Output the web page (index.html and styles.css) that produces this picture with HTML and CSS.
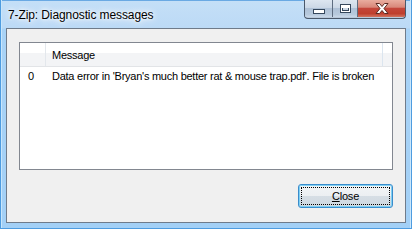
FILE: index.html
```html
<!DOCTYPE html>
<html>
<head>
<meta charset="utf-8">
<link rel="stylesheet" href="styles.css">
</head>
<body>
<div class="window">
  <div class="titlebar">
    <span class="title">7-Zip: Diagnostic messages</span>
    <div class="caption-buttons">
      <span class="cbtn cb-min"><span class="glyph-min"></span></span>
      <span class="cbtn cb-max"><span class="glyph-max"></span></span>
      <span class="cbtn cb-close">
        <svg width="14" height="11" viewBox="0 0 14 11"><path d="M1 0.5 H4.5 L7 3.5 L9.5 0.5 H13 L9 5.5 L13 10.5 H9.5 L7 7.5 L4.5 10.5 H1 L5 5.5 Z" fill="#fff" stroke="#5a2a22" stroke-width="1" stroke-linejoin="round"/></svg>
      </span>
    </div>
  </div>
  <div class="client">
    <div class="list">
      <div class="header">
        <div class="hcol c1"></div>
        <div class="hcol c2">Message</div>
        <div class="hcol c3"></div>
      </div>
      <div class="row">
        <div class="cell c1">0</div>
        <div class="cell c2">Data error in 'Bryan's much better rat &amp; mouse trap.pdf'. File is broken</div>
      </div>
    </div>
    <div class="footer">
      <button class="btn"><span><u>C</u>lose</span></button>
    </div>
  </div>
</div>
</body>
</html>
```

FILE: styles.css
```css
html, body {
  margin: 0;
  padding: 0;
}
body {
  width: 412px;
  height: 229px;
  overflow: hidden;
  font-family: "Liberation Sans", Arial, sans-serif;
}
.window {
  box-sizing: border-box;
  width: 412px;
  height: 229px;
  padding: 0 5px 5px 5px;
  border: 1px solid #4e9ce0;
  border-top: none;
  background: linear-gradient(to bottom, #6aa9e3 0px, #6aa9e3 1px, #c4dff7 1px, #bcdaf6 28px, #a9d3f6 29px, #a3d0f6 100%);
  box-shadow: inset 1px 0 0 #c9e6fb, inset -1px 0 0 #c9e6fb;
  display: flex;
  flex-direction: column;
}
.titlebar {
  height: 28px;
  display: flex;
  align-items: flex-start;
}
.title {
  margin-left: 2px;
  margin-top: 8px;
  font-size: 12px;
  letter-spacing: -0.1px;
  line-height: 14px;
  color: #000;
  text-shadow: 0 0 6px #fff, 0 0 10px #fff, 0 0 3px #fff;
}
.caption-buttons {
  position: relative;
  z-index: 2;
  margin-left: auto;
  display: flex;
  height: 18px;
  border: 1px solid #4a586a;
  border-top: none;
  border-radius: 0 0 4px 4px;
  overflow: hidden;
  background: #b9c9db;
}
.cbtn {
  display: flex;
  align-items: center;
  justify-content: center;
  height: 17px;
  box-sizing: border-box;
}
.cbtn svg { display: block; }
.cb-min {
  width: 28px;
  border-right: 1px solid #5e6d80;
  background: linear-gradient(#dde6f0, #ccd8e6 45%, #afc1d6 50%, #b7c9dc 85%, #cad8e8);
  align-items: flex-end;
  padding-bottom: 3px;
}
.cb-max {
  width: 25px;
  border-right: 1px solid #5e6d80;
  background: linear-gradient(#dde6f0, #ccd8e6 45%, #afc1d6 50%, #b7c9dc 85%, #cad8e8);
}
.cb-close {
  width: 47px;
  background: linear-gradient(#e9ad9f, #d9887a 42%, #c4463a 50%, #bf3f2e 80%, #d17460);
}
.glyph-min {
  display: block;
  box-sizing: border-box;
  width: 12px;
  height: 5px;
  background: #fff;
  border: 1px solid #35475c;
}
.glyph-max {
  display: block;
  box-sizing: border-box;
  width: 11px;
  height: 9px;
  background: #c9d6e4;
  border: 1px solid #35475c;
  box-shadow: inset 0 0 0 1px #fff, inset 0 2px 0 1px #fff, inset 0 0 0 2px #35475c;
}
.client {
  box-sizing: border-box;
  width: 400px;
  height: 195px;
  border: 1px solid #6f7b8a;
  background: #f0f0f0;
  padding: 13px 12px 0 12px;
  display: flex;
  flex-direction: column;
}
.list {
  box-sizing: border-box;
  height: 128px;
  border: 1px solid #828790;
  background: #fff;
  font-size: 11px;
  letter-spacing: -0.25px;
  line-height: 13px;
  color: #000;
}
.header {
  box-sizing: border-box;
  height: 24px;
  display: flex;
  border-bottom: 1px solid #e2e4e7;
  background: linear-gradient(to bottom, #ffffff 0%, #ffffff 45%, #f3f4f6 45%, #f3f4f6 100%);
}
.hcol {
  box-sizing: border-box;
  padding-top: 6px;
}
.hcol.c1 {
  width: 26px;
  border-right: 1px solid #e3e7ec;
}
.hcol.c2 {
  width: 337px;
  padding-left: 6px;
  border-right: 1px solid #dbe5ef;
}
.hcol.c3 {
  flex: 1;
}
.row {
  display: flex;
  height: 17px;
  box-sizing: border-box;
  padding-top: 3px;
  white-space: nowrap;
}
.cell.c1 {
  width: 26px;
  box-sizing: border-box;
  padding-left: 8px;
}
.cell.c2 {
  padding-left: 6px;
}
.footer {
  margin-top: 14px;
  display: flex;
  justify-content: flex-end;
}
.btn {
  position: relative;
  box-sizing: border-box;
  width: 95px;
  height: 24px;
  margin: 0;
  padding: 0;
  border: 1px solid #3a8ccc;
  border-radius: 3px;
  box-shadow: inset 0 0 0 1px #7fd0f3;
  background: linear-gradient(to bottom, #f2f4f6 0%, #eceff2 48%, #d6dee5 50%, #cfd8e0 100%);
  font-family: "Liberation Sans", Arial, sans-serif;
  font-size: 11px;
  letter-spacing: -0.2px;
  line-height: 13px;
  color: #000;
  display: flex;
  align-items: center;
  justify-content: center;
}
.btn::after {
  content: "";
  position: absolute;
  left: 2px;
  top: 2px;
  right: 2px;
  bottom: 2px;
  border: 1px dotted #000;
}
.btn span {
  margin-top: 1px;
}
```
